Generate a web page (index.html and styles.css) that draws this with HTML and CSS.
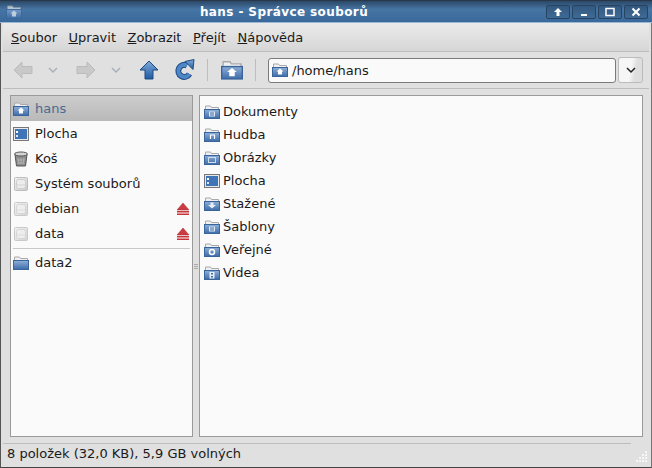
FILE: index.html
```html
<!DOCTYPE html>
<html lang="cs">
<head>
    <meta charset="UTF-8">
    <title>hans - Správce souborů</title>
    <link rel="stylesheet" href="styles.css">
</head>
<body>
    <svg class="defs" width="0" height="0">
        <defs>
            <linearGradient id="fBlue" x1="0" y1="0" x2="0" y2="1">
                <stop offset="0" stop-color="#8fb0d8"/>
                <stop offset="1" stop-color="#3d6ba8"/>
            </linearGradient>
            <linearGradient id="fArrow" x1="0" y1="0" x2="0" y2="1">
                <stop offset="0" stop-color="#7fa9dc"/>
                <stop offset="1" stop-color="#1f5aa0"/>
            </linearGradient>
            <linearGradient id="fDisk" x1="0" y1="0" x2="1" y2="1">
                <stop offset="0" stop-color="#f4f4f4"/>
                <stop offset="1" stop-color="#c9c9c9"/>
            </linearGradient>
            <symbol id="folder" viewBox="0 0 16 16">
                <path d="M1.500 6V2h5l1 1.500h7V6z" fill="#eef0f3" stroke="#a9a9a9"/>
                <rect x="0.500" y="5.500" width="15" height="9" fill="url(#fBlue)" stroke="#3a659b"/>
            </symbol>
            <symbol id="home" viewBox="0 0 16 16">
                <use href="#folder"/>
                <path d="M8 6.500l3.500 3h-1.500v3H6v-3H4.500z" fill="#fff"/>
            </symbol>
            <symbol id="docs" viewBox="0 0 16 16">
                <use href="#folder"/>
                <path d="M5 7.500h6v5H5z" fill="#dfe8f3"/>
                <path d="M6 9h4M6 11h4" stroke="#3d6ba8"/>
            </symbol>
            <symbol id="desktop" viewBox="0 0 16 16">
                <rect x="0.500" y="1.500" width="15" height="13" fill="#e8e8e8" stroke="#777"/>
                <rect x="2" y="3" width="12" height="10" fill="#3f74b6"/>
                <rect x="3" y="5" width="2" height="2" fill="#fff"/>
                <rect x="3" y="9" width="2" height="2" fill="#dde6f2"/>
            </symbol>
            <symbol id="disk" viewBox="0 0 16 16">
                <rect x="1.500" y="1.500" width="13" height="13" rx="1" fill="url(#fDisk)" stroke="#bdbdbd"/>
                <rect x="3.500" y="3.500" width="9" height="9" rx="2" fill="#ececec" stroke="#cdcdcd"/>
                <path d="M4 9h8" stroke="#d4d4d4"/>
            </symbol>
            <symbol id="eject" viewBox="0 0 14 14">
                <path d="M7 1l6 7H1z" fill="#cc3a42" stroke="#a62a30" stroke-width="0.500"/>
                <rect x="1" y="9" width="12" height="1.500" fill="#c8323a"/>
                <rect x="1" y="11.500" width="12" height="1.500" fill="#c8323a"/>
            </symbol>
            <symbol id="chevron" viewBox="0 0 12 8">
                <path d="M2 2l4 4 4-4" fill="none" stroke="currentColor" stroke-width="1.500"/>
            </symbol>
        </defs>
    </svg>

    <div class="window">
        <header class="titlebar">
            <svg class="ico titleicon"><use href="#home"/></svg>
            <div class="title">hans - Správce souborů</div>
            <div class="winbtns">
                <span class="winbtn"><svg width="10" height="10" viewBox="0 0 10 10"><path d="M5 1l4 4H6.500v4h-3V5H1z" fill="#fff"/></svg></span>
                <span class="winbtn"><svg width="10" height="10" viewBox="0 0 10 10"><rect x="2" y="7" width="6" height="2" fill="#fff"/></svg></span>
                <span class="winbtn"><svg width="10" height="10" viewBox="0 0 10 10"><rect x="1" y="1.500" width="8" height="7" fill="none" stroke="#fff" stroke-width="1.500"/></svg></span>
                <span class="winbtn"><svg width="10" height="10" viewBox="0 0 10 10"><path d="M1.500 1.500l7 7M8.500 1.500l-7 7" stroke="#fff" stroke-width="2"/></svg></span>
            </div>
        </header>

        <div class="content">
            <nav class="menubar">
                <span><u>S</u>oubor</span>
                <span><u>U</u>pravit</span>
                <span><u>Z</u>obrazit</span>
                <span><u>P</u>řejít</span>
                <span><u>N</u>ápověda</span>
            </nav>

            <div class="toolbar">
                <svg width="20" height="20" viewBox="0 0 20 20"><path d="M1 10l8-8v4.500h10v7H9V18z" fill="#c9c9c9" stroke="#bbb"/></svg>
                <svg class="chev" width="12" height="8"><use href="#chevron"/></svg>
                <svg width="20" height="20" viewBox="0 0 20 20"><path d="M19 10l-8-8v4.500H1v7h10V18z" fill="#c9c9c9" stroke="#bbb"/></svg>
                <svg class="chev" width="12" height="8"><use href="#chevron"/></svg>
                <svg class="up" width="20" height="20" viewBox="0 0 20 20"><path d="M10 1l9 9h-5v9H6v-9H1z" fill="url(#fArrow)" stroke="#1c4a85"/></svg>
                <svg class="reload" width="22" height="22" viewBox="0 0 22 22"><path d="M14 6.500A6 6 0 1 0 16.500 15" fill="none" stroke="#1c4a85" stroke-width="6"/><path d="M14 6.500A6 6 0 1 0 16.500 15" fill="none" stroke="#4f86c6" stroke-width="4"/><path d="M12 2.500l9-2-1 10z" fill="url(#fArrow)" stroke="#1c4a85"/></svg>
                <div class="vsep"></div>
                <svg class="homebtn" width="22" height="22"><use href="#home"/></svg>
                <div class="vsep"></div>
                <div class="address">
                    <div class="pathbox">
                        <svg class="ico"><use href="#home"/></svg>
                        <span>/home/hans</span>
                    </div>
                    <div class="dropbtn"><svg width="12" height="8"><use href="#chevron"/></svg></div>
                </div>
            </div>

            <div class="panes">
                <aside class="sidebar">
                    <div class="place active"><svg class="ico"><use href="#home"/></svg><span>hans</span></div>
                    <div class="place"><svg class="ico"><use href="#desktop"/></svg><span>Plocha</span></div>
                    <div class="place"><svg class="ico" viewBox="0 0 16 16"><path d="M2 3.500h12l-1.500 11.500h-9z" fill="#8c8c8c" stroke="#555"/><ellipse cx="8" cy="3" rx="6.500" ry="2" fill="#d4d4d4" stroke="#555"/><path d="M5 7l1 6M8 7v6M11 7l-1 6M4 9h8M4.500 12h7" stroke="#bbb" stroke-width="0.700"/></svg><span>Koš</span></div>
                    <div class="place"><svg class="ico"><use href="#disk"/></svg><span>Systém souborů</span></div>
                    <div class="place"><svg class="ico dim"><use href="#disk"/></svg><span>debian</span><svg width="14" height="14"><use href="#eject"/></svg></div>
                    <div class="place"><svg class="ico dim"><use href="#disk"/></svg><span>data</span><svg width="14" height="14"><use href="#eject"/></svg></div>
                    <div class="hsep"></div>
                    <div class="place"><svg class="ico"><use href="#folder"/></svg><span>data2</span></div>
                </aside>

                <div class="grip"><i></i><i></i><i></i></div>

                <main class="files">
                    <div class="file"><svg class="ico"><use href="#docs"/></svg><span>Dokumenty</span></div>
                    <div class="file"><svg class="ico" viewBox="0 0 16 16"><use href="#folder"/><path d="M6.500 12V8h4v4M6.500 8h4" fill="none" stroke="#fff" stroke-width="1.200"/></svg><span>Hudba</span></div>
                    <div class="file"><svg class="ico" viewBox="0 0 16 16"><use href="#folder"/><rect x="4.500" y="7.500" width="7" height="5" fill="none" stroke="#cfdcec"/></svg><span>Obrázky</span></div>
                    <div class="file"><svg class="ico"><use href="#desktop"/></svg><span>Plocha</span></div>
                    <div class="file"><svg class="ico" viewBox="0 0 16 16"><use href="#folder"/><path d="M6.500 6.500h3v2.500H12l-4 3.500-4-3.500h2.500z" fill="#e8eff8"/></svg><span>Stažené</span></div>
                    <div class="file"><svg class="ico"><use href="#docs"/></svg><span>Šablony</span></div>
                    <div class="file"><svg class="ico" viewBox="0 0 16 16"><use href="#folder"/><circle cx="8" cy="10" r="2.500" fill="none" stroke="#fff" stroke-width="1.500"/></svg><span>Veřejné</span></div>
                    <div class="file"><svg class="ico" viewBox="0 0 16 16"><use href="#folder"/><path d="M5.500 7h5v6.500h-5z" fill="#e8eff8"/><path d="M7 8h2v1.500H7zM7 11h2v1.500H7z" fill="#3d6ba8"/></svg><span>Videa</span></div>
                </main>
            </div>

            <footer class="statusbar">
                <div class="statusline"></div>
                <div class="statusrow">8 položek (32,0 KB), 5,9 GB volných</div>
                <svg class="resize" width="14" height="14" viewBox="0 0 14 14"><path d="M10 0h2v2h-2zM10 3h2v2h-2zM7 3h2v2H7zM10 6h2v2h-2zM7 6h2v2H7zM4 6h2v2H4zM10 9h2v2h-2zM7 9h2v2H7zM4 9h2v2H4zM1 9h2v2H1z" fill="#f6f6f6"/></svg>
            </footer>
        </div>
    </div>
</body>
</html>
```

FILE: styles.css
```css
html, body {
    margin: 0;
    height: 100%;
    overflow: hidden;
}
body {
    font-family: "DejaVu Sans", sans-serif;
    font-size: 13px;
    color: #1a1a1a;
    background: #e0e0e0;
}
.defs {
    position: absolute;
}
.window {
    width: 652px;
    height: 468px;
    display: flex;
    flex-direction: column;
}
.ico {
    width: 16px;
    height: 16px;
    flex: none;
}
.dim {
    opacity: 0.8;
}

/* title bar */
.titlebar {
    height: 23px;
    flex: none;
    display: flex;
    align-items: center;
    box-sizing: border-box;
    padding: 0 4px 0 6px;
    background: linear-gradient(#2c4866, #4675a4 40%, #39689a);
    border-top: 1px solid #28384a;
    border-bottom: 1px solid #9ab8d4;
}
.titleicon {
    opacity: 0.65;
}
.title {
    flex: 1;
    text-align: center;
    color: #fff;
    font-weight: bold;
    font-size: 12px;
    letter-spacing: 0.4px;
}
.winbtns {
    display: flex;
    gap: 2px;
}
.winbtn {
    width: 24px;
    height: 14px;
    display: flex;
    align-items: center;
    justify-content: center;
    border: 1px solid #264462;
    border-radius: 2px;
    box-sizing: border-box;
    background: linear-gradient(#33597f, #3f6a96);
}

/* window content */
.content {
    flex: 1;
    display: flex;
    flex-direction: column;
    box-sizing: border-box;
    padding: 0 2px 3px;
    min-height: 0;
    background: #e0e0e0;
    border-left: 1px solid #555;
    border-right: 1px solid #777;
    border-bottom: 1px solid #444;
}
.menubar {
    height: 29px;
    flex: none;
    display: flex;
    align-items: center;
    gap: 11.5px;
    padding: 0 8px;
    box-sizing: border-box;
    background: linear-gradient(#ebebeb, #d6d6d6);
    border-bottom: 1px solid #bdbdbd;
}
.toolbar {
    height: 37px;
    flex: none;
    display: flex;
    align-items: center;
    box-sizing: border-box;
    padding: 0 6px 0 10px;
    border-bottom: 1px solid #bdbdbd;
}
.chev {
    margin: 0 17px 0 14px;
    color: #a9b0b8;
}
.up {
    margin-right: 14px;
}
.vsep {
    width: 1px;
    height: 22px;
    background: #bdbdbd;
    margin: 0 13px;
}
.reload {
    margin-right: -1px;
}
.homebtn {
    margin-right: -1px;
}
.address {
    flex: 1;
    display: flex;
    align-items: center;
    gap: 2px;
    margin-left: -1px;
}
.pathbox {
    flex: 1;
    height: 25px;
    display: flex;
    align-items: center;
    gap: 4px;
    box-sizing: border-box;
    padding: 0 3px;
    background: #fafafa;
    border: 1px solid #7a7a7a;
    border-radius: 3px;
}
.dropbtn {
    width: 25px;
    height: 26px;
    display: flex;
    align-items: center;
    justify-content: center;
    box-sizing: border-box;
    border: 1px solid #bbb;
    border-radius: 3px;
    color: #222;
    background: linear-gradient(100deg, #f6f6f6 50%, #dedede 70%);
}

/* sidebar and file list */
.panes {
    flex: 1;
    display: flex;
    min-height: 0;
    padding: 6px 6px 6px 7px;
}
.sidebar,
.files {
    background: #fafafa;
    border: 1px solid #9a9a9a;
    box-sizing: border-box;
}
.sidebar {
    width: 183px;
    flex: none;
}
.place {
    height: 25px;
    display: flex;
    align-items: center;
    gap: 6px;
    padding: 0 2px;
}
.place span {
    flex: 1;
}
.place.active {
    background: linear-gradient(#cccccc, #b9b9b9);
    color: #4a6a90;
}
.hsep {
    height: 1px;
    background: #c8c8c8;
    margin: 2px 2px 1px;
}
.grip {
    width: 6px;
    flex: none;
    display: flex;
    flex-direction: column;
    justify-content: center;
    align-items: center;
    gap: 1px;
}
.grip i {
    width: 4px;
    height: 1px;
    background: #aaa;
}
.files {
    flex: 1;
    padding: 4px 2px 4px 4px;
}
.file {
    height: 23px;
    display: flex;
    align-items: center;
    gap: 3px;
}

/* status bar */
.statusbar {
    height: 21px;
    flex: none;
    position: relative;
}
.statusline {
    height: 1px;
    background: #bdbdbd;
    margin-right: 18px;
}
.statusrow {
    height: 20px;
    line-height: 20px;
    padding-left: 4px;
}
.resize {
    position: absolute;
    right: 0;
    bottom: -1px;
}
```
